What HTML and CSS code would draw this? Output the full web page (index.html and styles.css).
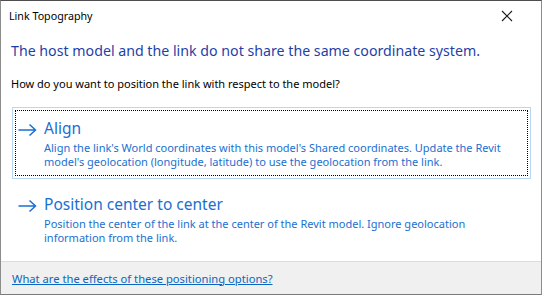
FILE: index.html
```html
<!DOCTYPE html>
<html lang="en">
<head>
	<meta charset="UTF-8">
	<title>Link Topography</title>
	<link rel="stylesheet" href="styles.css">
</head>
<body>
	<div class="dialog">
		<div class="titlebar">
			<span class="title">Link Topography</span>
			<span class="close">
				<svg width="12" height="12" viewBox="0 0 12 12"><path d="M1 1L11 11M11 1L1 11" stroke="#1a1a1a" stroke-width="1.1" fill="none"/></svg>
			</span>
		</div>
		<div class="content">
			<div class="main">The host model and the link do not share the same coordinate system.</div>
			<div class="question">How do you want to position the link with respect to the model?</div>
			<div class="cmd focused">
				<div class="inner">
					<svg class="arrow" width="19" height="14" viewBox="0 0 19 14"><path d="M0.5 7H17.5M11.5 1.5L17.5 7L11.5 12.5" stroke="#1b6fd1" stroke-width="1.5" fill="none"/></svg>
					<div class="text">
						<div class="head">Align</div>
						<div class="desc">Align the link's World coordinates with this model's Shared coordinates. Update the Revit model's geolocation (longitude, latitude) to use the geolocation from the link.</div>
					</div>
				</div>
			</div>
			<div class="cmd">
				<div class="inner">
					<svg class="arrow" width="19" height="14" viewBox="0 0 19 14"><path d="M0.5 7H17.5M11.5 1.5L17.5 7L11.5 12.5" stroke="#1b6fd1" stroke-width="1.5" fill="none"/></svg>
					<div class="text">
						<div class="head">Position center to center</div>
						<div class="desc">Position the center of the link at the center of the Revit model. Ignore geolocation information from the link.</div>
					</div>
				</div>
			</div>
		</div>
		<div class="footer">
			<a href="#">What are the effects of these positioning options?</a>
		</div>
	</div>
</body>
</html>
```

FILE: styles.css
```css
*{
	margin: 0;
	padding: 0;
}
body{
	background: #fff;
	font-family: "Noto Sans", "Liberation Sans", sans-serif;
}
.dialog{
	width: 542px;
	height: 295px;
	box-sizing: border-box;
	border: 1px solid #8c8c8c;
	border-top-color: #4d4d4d;
	border-bottom-color: #7a7a7a;
	display: flex;
	flex-direction: column;
	background: #fff;
}
.titlebar{
	height: 30px;
	display: flex;
	align-items: center;
	justify-content: space-between;
	padding: 0 28px 0 8px;
}
.title{
	font-size: 10.7px;
	color: #000;
}
.close{
	display: flex;
}
.content{
	padding: 9px 10px 0 10px;
}
.main{
	font-size: 14.2px;
	color: #1f3fa8;
	line-height: 22px;
}
.question{
	font-size: 11px;
	color: #000;
	margin-top: 14px;
	line-height: 16px;
}
.cmd{
	margin-top: 15px;
	margin-left: 1px;
	border: 1px solid transparent;
	padding: 2px;
}
.cmd.focused{
	border-color: #b9d7f2;
}
.cmd .inner{
	border: 1px dotted transparent;
	display: flex;
	padding: 7px 0 6px 2px;
}
.cmd.focused .inner{
	border-color: #000;
}
.arrow{
	margin-top: 5px;
	margin-right: 7px;
	flex-shrink: 0;
}
.head{
	font-size: 15.5px;
	line-height: 20px;
	color: #1b6fd1;
}
.desc{
	font-size: 11px;
	line-height: 14px;
	color: #1b6fd1;
	margin-top: 3px;
}
.cmd + .cmd{
	margin-top: 4px;
}
.footer{
	margin-top: auto;
	height: 32px;
	background: #f0f0f0;
	border-top: 1px solid #dcdcdc;
	display: flex;
	align-items: center;
	padding-left: 11px;
}
.footer a{
	font-size: 11.2px;
	color: #0a66c2;
}
```
